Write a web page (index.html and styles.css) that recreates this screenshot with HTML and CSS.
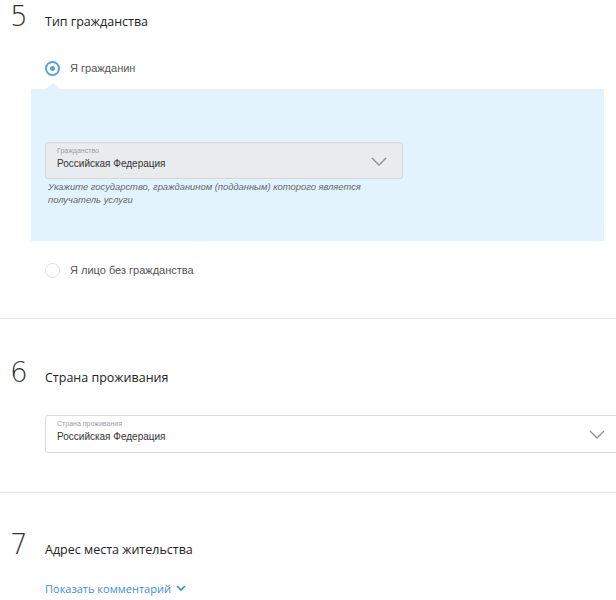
FILE: index.html
```html
<!DOCTYPE html>
<html>
<head>
	<meta charset="utf-8">
	<title>Гражданство</title>
	<link rel="stylesheet" href="styles.css">
</head>
<body>
	<div class="step step-5">
		<div class="step-head">
			<span class="step-num">5</span>
			<span class="step-title">Тип гражданства</span>
		</div>
		<label class="radio checked">
			<span class="radio-mark"></span>
			<span class="radio-text">Я гражданин</span>
		</label>
		<div class="panel">
			<div class="select grey">
				<span class="select-label">Гражданство</span>
				<span class="select-value">Российская Федерация</span>
				<svg class="chevron" width="16" height="9" viewBox="0 0 16 9"><path d="M1 1l7 7 7-7" fill="none" stroke="#8a8f94" stroke-width="1.3"/></svg>
			</div>
			<p class="hint">Укажите государство, гражданином (подданным) которого является получатель услуги</p>
		</div>
		<label class="radio">
			<span class="radio-mark"></span>
			<span class="radio-text">Я лицо без гражданства</span>
		</label>
	</div>

	<div class="step step-6">
		<div class="step-head">
			<span class="step-num">6</span>
			<span class="step-title">Страна проживания</span>
		</div>
		<div class="select wide">
			<span class="select-label">Страна проживания</span>
			<span class="select-value">Российская Федерация</span>
			<svg class="chevron" width="16" height="9" viewBox="0 0 16 9"><path d="M1 1l7 7 7-7" fill="none" stroke="#8a8f94" stroke-width="1.3"/></svg>
		</div>
	</div>

	<div class="step step-7">
		<div class="step-head">
			<span class="step-num">7</span>
			<span class="step-title">Адрес места жительства</span>
		</div>
		<a class="comment-link" href="#">Показать комментарий
			<svg width="10" height="7" viewBox="0 0 10 7"><path d="M1 1l4 4 4-4" fill="none" stroke="#3d8fd6" stroke-width="1.6"/></svg>
		</a>
	</div>
</body>
</html>
```

FILE: styles.css
```css
* {
	margin: 0;
	padding: 0;
	box-sizing: border-box;
}

body {
	font-family: "Open Sans", sans-serif;
	color: #333;
	background: #fff;
	overflow: hidden;
	width: 616px;
}

.step {
	padding-left: 10px;
	border-bottom: 1px solid #e4e6e8;
}

.step-7 {
	border-bottom: none;
}

.step-head {
	display: flex;
	align-items: baseline;
}

.step-num {
	width: 35px;
	font-family: "DejaVu Sans", sans-serif;
	font-weight: 200;
	font-size: 28px;
	line-height: 30px;
	color: #333;
}

.step-title {
	font-size: 12.5px;
	color: #222;
}

.step-5 {
	padding-bottom: 40px;
}

.step-5 .step-head {
	margin-top: 2px;
}

.radio {
	display: flex;
	align-items: center;
	margin-left: 35px;
	height: 16px;
	font-family: "Liberation Sans", sans-serif;
	font-size: 11px;
	color: #555;
}

.step-5 .radio.checked {
	margin-top: 28px;
}

.radio-mark {
	width: 15px;
	height: 15px;
	border: 1px solid #dcdfe2;
	border-radius: 50%;
	margin-right: 10px;
	position: relative;
	background: #fff;
}

.radio.checked .radio-mark {
	border: 2px solid #5a9fd8;
}

.radio.checked .radio-mark::after {
	content: "";
	position: absolute;
	left: 3px;
	top: 3px;
	width: 5px;
	height: 5px;
	border-radius: 50%;
	background: #5a9fd8;
}

.panel {
	position: relative;
	margin: 13px 0 21px 21px;
	width: 573px;
	background: #e3f3fd;
	padding: 53px 14px 35px;
}

.panel::before {
	content: "";
	position: absolute;
	left: 15px;
	top: -6px;
	border-left: 7px solid transparent;
	border-right: 7px solid transparent;
	border-bottom: 6px solid #e3f3fd;
}

.select {
	position: relative;
	height: 38px;
	border: 1px solid #d9dcdf;
	border-radius: 3px;
	padding: 3px 11px 0;
	background: #fff;
}

.select.grey {
	width: 358px;
	height: 37px;
	background: #e9ecee;
	border-color: #d4d8db;
}

.select-label {
	display: block;
	font-family: "Liberation Sans", sans-serif;
	font-size: 7px;
	line-height: 9px;
	color: #9aa0a5;
}

.select-value {
	display: block;
	font-family: "Liberation Sans", sans-serif;
	font-size: 10px;
	line-height: 14px;
	margin-top: 2px;
	color: #333;
}

.chevron {
	position: absolute;
	right: 15px;
	top: 14px;
}

.hint {
	margin: 1px 0 0 3px;
	width: 330px;
	font-family: "Liberation Sans", sans-serif;
	font-style: italic;
	font-size: 9.4px;
	line-height: 13px;
	color: #666;
}

.step-6 {
	padding-top: 39px;
	padding-bottom: 39px;
}

.select.wide {
	margin: 27px 0 0 35px;
	width: 580px;
}

.select.wide .chevron {
	right: 19px;
}

.step-7 {
	padding-top: 37px;
}

.comment-link {
	display: flex;
	align-items: center;
	gap: 5px;
	margin: 21px 0 0 35px;
	font-size: 11px;
	color: #3d8fd6;
	text-decoration: none;
}
```
